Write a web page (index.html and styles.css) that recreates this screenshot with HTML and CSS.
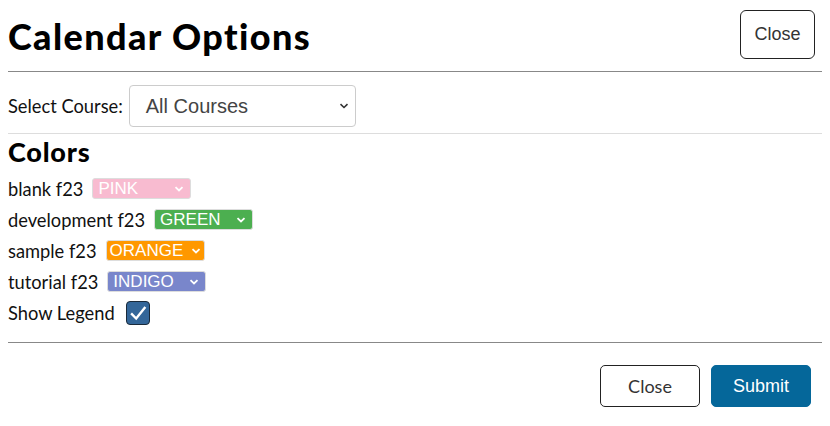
FILE: index.html
```html
<!DOCTYPE html>
<html>
<head>
<meta charset="utf-8">
<link rel="stylesheet" href="styles.css">
</head>
<body>
<div class="header">
  <h1 class="title">Calendar Options</h1>
  <button class="btn-top">Close</button>
</div>
<div class="rule dark"></div>
<div class="course-row">
  <label class="label">Select Course:</label>
  <div class="select big">All Courses<svg class="chev" viewBox="0 0 10 6"><path d="M1.5 1.2 L5 4.5 L8.5 1.2" fill="none" stroke="#333" stroke-width="1.6"/></svg></div>
</div>
<div class="rule light"></div>
<h2 class="sub">Colors</h2>
<div class="row"><span class="label">blank f23</span><div class="select small pink">PINK<svg class="chev-s" viewBox="0 0 10 6"><path d="M1.5 1.2 L5 4.5 L8.5 1.2" fill="none" stroke="#fff" stroke-width="1.8"/></svg></div></div>
<div class="row"><span class="label">development f23</span><div class="select small green">GREEN<svg class="chev-s" viewBox="0 0 10 6"><path d="M1.5 1.2 L5 4.5 L8.5 1.2" fill="none" stroke="#fff" stroke-width="1.8"/></svg></div></div>
<div class="row"><span class="label">sample f23</span><div class="select small orange">ORANGE<svg class="chev-s" viewBox="0 0 10 6"><path d="M1.5 1.2 L5 4.5 L8.5 1.2" fill="none" stroke="#fff" stroke-width="1.8"/></svg></div></div>
<div class="row"><span class="label">tutorial f23</span><div class="select small indigo">INDIGO<svg class="chev-s" viewBox="0 0 10 6"><path d="M1.5 1.2 L5 4.5 L8.5 1.2" fill="none" stroke="#fff" stroke-width="1.8"/></svg></div></div>
<div class="row legend"><span class="label">Show Legend</span><span class="check"><svg viewBox="0 0 24 24"><path d="M4.5 12.5 L10 18 L20 5.5" fill="none" stroke="#fff" stroke-width="2.6"/></svg></span></div>
<div class="rule dark foot-rule"></div>
<div class="footer">
  <button class="btn btn-close">Close</button>
  <button class="btn btn-submit">Submit</button>
</div>
</body>
</html>
```
FILE: styles.css
```css
body {
  margin: 8px;
  font-family: Lato, "Noto Sans", sans-serif;
  font-size: 18.3px;
  color: #111;
  background: #fff;
}
.header {
  display: flex;
  justify-content: space-between;
  align-items: center;
  padding: 1px 7px 0 0;
  height: 50px;
}
.title {
  margin: 0;
  font-size: 36px;
  font-weight: 900;
  letter-spacing: 1.4px;
  color: #000;
  line-height: 44px;
  padding-top: 4px;
}
.btn-top {
  width: 75px;
  height: 49px;
  border: 1px solid #222;
  border-radius: 6px;
  background: #fff;
  font-family: "Liberation Sans", Arial, sans-serif;
  font-size: 18px;
  color: #333;
}
.rule { height: 1px; }
.rule.dark { background: #888; margin-top: 12px; }
.rule.light { background: #ddd; margin-top: 6px; }
.rule.foot-rule { margin-top: 14px; }
.course-row {
  display: flex;
  align-items: center;
  margin-top: 13px;
}
.label { margin-right: 4px; }
.course-row .label { margin-right: 6px; }
.select {
  display: flex;
  align-items: center;
  justify-content: space-between;
  box-sizing: border-box;
  font-family: "Liberation Sans", Arial, sans-serif;
}
.select.big {
  width: 227px;
  height: 42px;
  border: 1px solid #ccc;
  border-radius: 4px;
  padding: 0 6px 0 16px;
  font-size: 20px;
  color: #444;
}
.chev { width: 10px; height: 6px; }
.sub {
  margin: 2px 0 5px;
  font-size: 27px;
  font-weight: 900;
  letter-spacing: 0.8px;
  color: #000;
  line-height: 32px;
}
.row {
  display: flex;
  align-items: center;
  height: 31px;
}
.row .label { margin-right: 9px; }
.select.small {
  width: 99px;
  height: 21px;
  border: 1px solid #ddd;
  border-radius: 3px;
  padding: 1px 6px 0 5px;
  font-size: 17px;
  color: #fff;
}
.chev-s { width: 10px; height: 6px; flex: none; }
.pink { background: #f8bbd0; }
.green { background: #4caf50; }
.orange { background: #ff9800; padding-right: 3px !important; padding-left: 3px !important; }
.indigo { background: #7986cb; }
.row.legend .label { margin-right: 11px; }
.check {
  width: 24px;
  height: 24px;
  box-sizing: border-box;
  background: #336699;
  border: 1px solid #1a2a3a;
  border-radius: 4px;
  display: flex;
}
.check svg { width: 22px; height: 22px; }
.footer {
  display: flex;
  justify-content: flex-end;
  gap: 11px;
  padding: 22px 11px 0 0;
}
.btn {
  width: 100px;
  height: 42px;
  border-radius: 5px;
  font-size: 18px;
}
.btn-close {
  background: #fff;
  border: 1px solid #222;
  color: #333;
  font-family: Lato, "Noto Sans", sans-serif;
}
.btn-submit {
  background: #05679a;
  border: 1px solid #05679a;
  color: #fff;
  font-family: "Liberation Sans", Arial, sans-serif;
}
```
